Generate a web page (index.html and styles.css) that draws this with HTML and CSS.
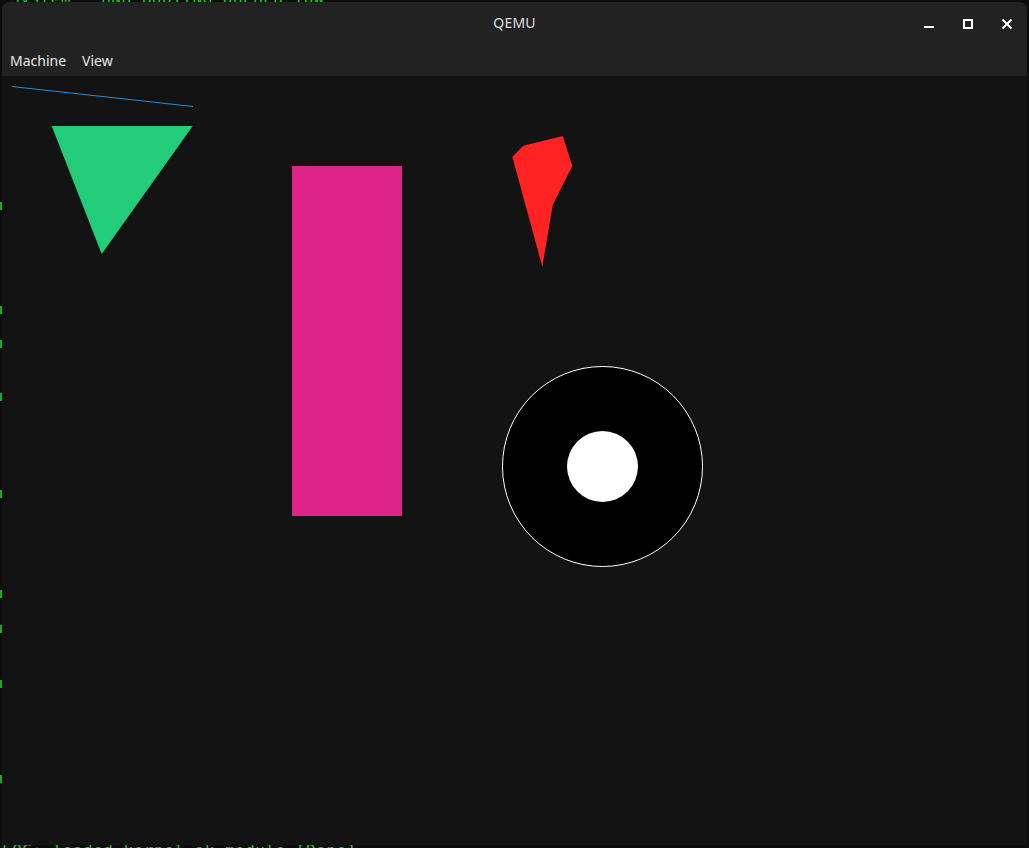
FILE: index.html
```html
<!DOCTYPE html>
<html>
<head>
<meta charset="utf-8">
<title>QEMU</title>
<link rel="stylesheet" href="styles.css">
</head>
<body>
<div class="desktop">
  <pre class="term term-top">System   UNU BOOTING QUEUED TOW!</pre>
  <div class="term-left">
    <span style="top:202px"></span>
    <span style="top:306px"></span>
    <span style="top:340px"></span>
    <span style="top:393px"></span>
    <span style="top:490px"></span>
    <span style="top:590px"></span>
    <span style="top:625px"></span>
    <span style="top:680px"></span>
    <span style="top:775px"></span>
  </div>
  <pre class="term term-bottom">LOG: loaded kernel ok module [Done]</pre>

  <div class="window">
    <div class="titlebar">
      <div class="title">QEMU</div>
      <div class="controls">
        <button class="ctl" aria-label="Minimize">
          <svg width="12" height="12" viewBox="0 0 12 12"><rect x="1" y="7" width="10" height="2" fill="#fff"/></svg>
        </button>
        <button class="ctl" aria-label="Maximize">
          <svg width="12" height="12" viewBox="0 0 12 12"><rect x="2" y="1" width="8" height="8" fill="none" stroke="#fff" stroke-width="2"/></svg>
        </button>
        <button class="ctl" aria-label="Close">
          <svg width="12" height="12" viewBox="0 0 12 12"><path d="M1.5 0.5 L10.5 9.5 M10.5 0.5 L1.5 9.5" stroke="#fff" stroke-width="2" fill="none"/></svg>
        </button>
      </div>
    </div>
    <div class="menubar">
      <span class="menu-item">Machine</span>
      <span class="menu-item">View</span>
    </div>
    <div class="screen">
      <svg class="canvas" width="1025" height="769" viewBox="0 0 1025 769">
        <line x1="10" y1="10.5" x2="191" y2="30.5" stroke="#2a8ad8" stroke-width="1"/>
        <polygon points="49.7,50 190.7,50 99.7,178" fill="#22cc79"/>
        <rect x="290" y="90" width="110" height="350" fill="#de2489"/>
        <polygon points="510.3,80.7 521.3,69.7 560.7,60 570.3,90 550.7,129 540.3,190.7" fill="#ff2323"/>
        <circle cx="600.5" cy="390.5" r="100" fill="#000" stroke="#fff" stroke-width="1"/>
        <circle cx="600.5" cy="390.5" r="35.5" fill="#fff"/>
      </svg>
    </div>
  </div>
</div>
</body>
</html>
```

FILE: styles.css
```css
html, body {
  margin: 0;
  padding: 0;
  width: 1029px;
  height: 848px;
  overflow: hidden;
  background: #0c0c0c;
}

.desktop {
  position: relative;
  width: 1029px;
  height: 848px;
  overflow: hidden;
}

.term {
  margin: 0;
  font-family: "DejaVu Sans Mono", "Liberation Mono", monospace;
  font-size: 16px;
  line-height: 16px;
  color: #1ecb1e;
  white-space: pre;
  letter-spacing: 0.5px;
}

.term-top {
  position: absolute;
  left: 10px;
  top: -9px;
}

.term-bottom {
  position: absolute;
  left: 2px;
  top: 843px;
}

.term-left span {
  position: absolute;
  left: 0;
  width: 2px;
  height: 8px;
  background: #1ca91c;
}

.window {
  position: absolute;
  left: 2px;
  top: 2px;
  width: 1025px;
  height: 843px;
  border-radius: 8px 8px 0 0;
  overflow: hidden;
  background: #131313;
  display: flex;
  flex-direction: column;
  font-family: "Noto Sans", "Open Sans", sans-serif;
}

.titlebar {
  height: 42px;
  background: #222222;
  display: flex;
  align-items: center;
  justify-content: center;
  position: relative;
  flex: none;
}

.title {
  color: #dedede;
  font-size: 14px;
  line-height: 42px;
  letter-spacing: 0.2px;
}

.controls {
  position: absolute;
  right: 8px;
  top: 11px;
  display: flex;
  gap: 15px;
}

.ctl {
  width: 24px;
  height: 24px;
  padding: 0;
  border: 0;
  background: transparent;
  display: flex;
  align-items: center;
  justify-content: center;
}

.ctl svg {
  display: block;
}

.menubar {
  height: 32px;
  background: #222222;
  display: flex;
  align-items: center;
  padding-left: 8px;
  gap: 16px;
  flex: none;
}

.menu-item {
  color: #e6e6e6;
  font-size: 14px;
  line-height: 20px;
  padding-top: 1px;
}

.screen {
  flex: 1;
  background: #131313;
}

.canvas {
  display: block;
}
```
